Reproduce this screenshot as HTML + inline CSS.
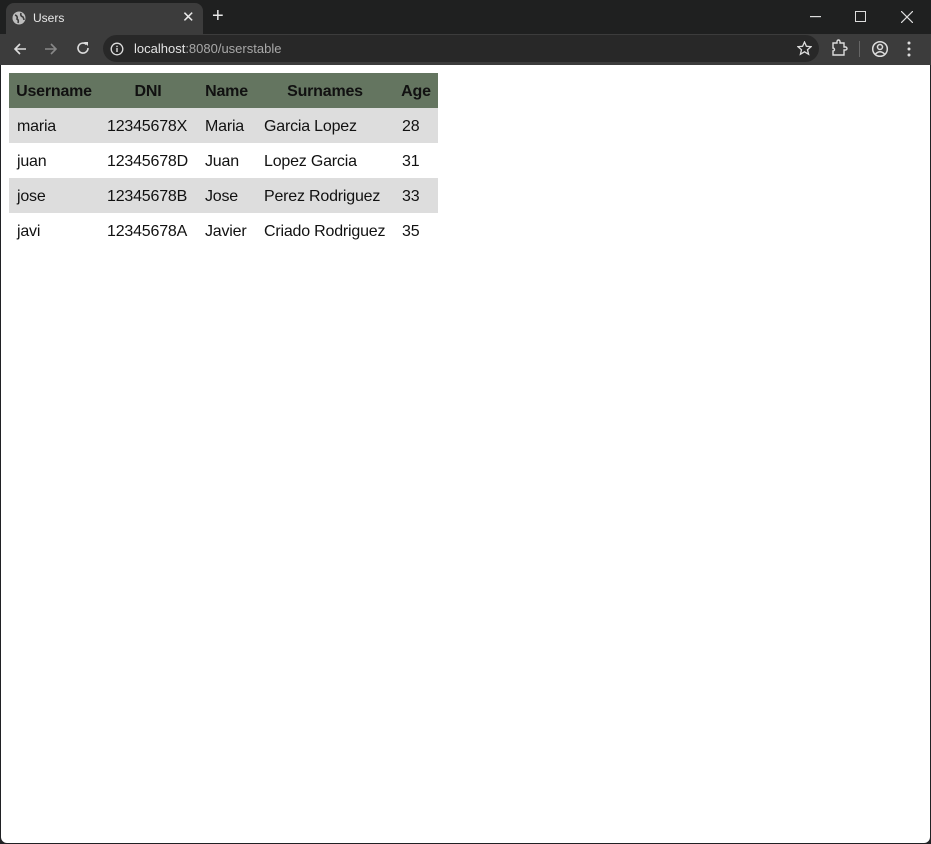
<!DOCTYPE html>
<html><head><meta charset="utf-8"><style>
*{margin:0;padding:0;box-sizing:border-box}
html,body{width:931px;height:844px;overflow:hidden;background:#202124;font-family:"Liberation Sans",sans-serif}
#top{position:absolute;left:0;top:0;width:931px;height:34px;background:#1f2020}
#tab{position:absolute;left:6px;top:3px;width:197px;height:31px;background:#3c3c3c;border-radius:8px 8px 0 0;color:#e8e8e8;font-size:12px}
#bar{position:absolute;left:0;top:34px;width:931px;height:31px;background:#3c3c3c}
#url{position:absolute;left:103px;top:1px;width:716px;height:27px;background:#282828;border-radius:14px;color:#e3e3e3;font-size:13px}
#page{position:absolute;left:1px;top:65px;width:929px;height:778px;background:#fff;border-radius:0 0 6px 6px}
table{position:absolute;left:8px;top:8px;width:429px;border-collapse:collapse;table-layout:fixed;font-size:16px;color:#111}
th{background:#647560;height:35px;font-weight:bold;text-align:center;padding:3px 0 0 0;white-space:nowrap;overflow:hidden;letter-spacing:-0.2px}
td{height:35px;padding:3px 0 0 8px;white-space:nowrap;overflow:hidden;letter-spacing:-0.2px}
tr.g td{background:#dddddd}
svg{position:absolute}
</style></head><body>
<div id="top"></div>
<div id="tab">
<svg style="left:6px;top:8px" width="14" height="14" viewBox="0 0 14 14"><circle cx="7" cy="7" r="6.5" fill="#bdbdbd"/><path d="M3 4 Q6 5 5 8 Q7 9 6 12 M9 2 Q8 5 11 6 Q12 8 12 9" stroke="#3c3c3c" stroke-width="1.6" fill="none"/></svg>
<span style="position:absolute;left:27px;top:8px">Users</span>
<span style="position:absolute;left:176px;top:5px;font-size:15px">✕</span>
</div>
<span style="position:absolute;left:212px;top:5px;color:#e8e8e8;font-size:20px">+</span>
<svg style="left:810px;top:16px" width="11" height="2"><rect width="11" height="1.2" fill="#ddd"/></svg>
<svg style="left:855px;top:11px" width="11" height="11"><rect x="0.5" y="0.5" width="10" height="10" fill="none" stroke="#ddd"/></svg>
<svg style="left:901px;top:11px" width="12" height="12"><path d="M0 0L12 12M12 0L0 12" stroke="#ddd" stroke-width="1.2"/></svg>
<div id="bar">
<svg style="left:13px;top:8px" width="14" height="14"><path d="M13 7H2M7 2L2 7L7 12" stroke="#ddd" stroke-width="1.6" fill="none"/></svg>
<svg style="left:44px;top:8px" width="14" height="14"><path d="M1 7H12M7 2L12 7L7 12" stroke="#888" stroke-width="1.6" fill="none"/></svg>
<svg style="left:76px;top:7px" width="14" height="14"><path d="M12 7A5 5 0 1 1 10.5 3.5" stroke="#ddd" stroke-width="1.6" fill="none"/><path d="M8 1H12V5Z" fill="#ddd"/></svg>
<div id="url">
<svg style="left:7px;top:7px" width="14" height="14"><circle cx="7" cy="7" r="5.8" stroke="#ddd" stroke-width="1.3" fill="none"/><rect x="6.3" y="6" width="1.4" height="4" fill="#ddd"/><rect x="6.3" y="3.7" width="1.4" height="1.4" fill="#ddd"/></svg>
<span style="position:absolute;left:31px;top:6px">localhost<span style="color:#a8a8a8">:8080/userstable</span></span>
<svg style="left:694px;top:6px" width="15" height="15" viewBox="0 0 15 15"><path d="M7.5 1L9.4 5.3L14 5.7L10.5 8.7L11.6 13.3L7.5 10.8L3.4 13.3L4.5 8.7L1 5.7L5.6 5.3Z" stroke="#ddd" stroke-width="1.3" fill="none"/></svg>
</div>
<svg style="left:831px;top:5px" width="18" height="18"><path d="M2 4H6V2.5A1.5 1.5 0 0 1 9 2.5V4H13V8H14.5A1.5 1.5 0 0 1 14.5 11H13V16H2V12A1.5 1.5 0 0 0 2 9Z" stroke="#ddd" stroke-width="1.4" fill="none"/></svg>
<div style="position:absolute;left:859px;top:7px;width:1px;height:16px;background:#666"></div>
<svg style="left:871px;top:6px" width="18" height="18"><circle cx="9" cy="9" r="7.3" stroke="#ddd" stroke-width="1.5" fill="none"/><circle cx="9" cy="7" r="2.5" stroke="#ddd" stroke-width="1.5" fill="none"/><path d="M4.5 14Q9 9.5 13.5 14" stroke="#ddd" stroke-width="1.5" fill="none"/></svg>
<svg style="left:907px;top:7px" width="4" height="16"><circle cx="2" cy="2" r="1.5" fill="#ddd"/><circle cx="2" cy="8" r="1.5" fill="#ddd"/><circle cx="2" cy="14" r="1.5" fill="#ddd"/></svg>
</div>
<div id="page">
<table>
<colgroup><col style="width:90px"><col style="width:98px"><col style="width:59px"><col style="width:138px"><col style="width:44px"></colgroup>
<tr><th>Username</th><th>DNI</th><th>Name</th><th>Surnames</th><th>Age</th></tr>
<tr class="g"><td>maria</td><td>12345678X</td><td>Maria</td><td>Garcia Lopez</td><td>28</td></tr>
<tr><td>juan</td><td>12345678D</td><td>Juan</td><td>Lopez Garcia</td><td>31</td></tr>
<tr class="g"><td>jose</td><td>12345678B</td><td>Jose</td><td>Perez Rodriguez</td><td>33</td></tr>
<tr><td>javi</td><td>12345678A</td><td>Javier</td><td>Criado Rodriguez</td><td>35</td></tr>
</table>
</div>
</body></html>
